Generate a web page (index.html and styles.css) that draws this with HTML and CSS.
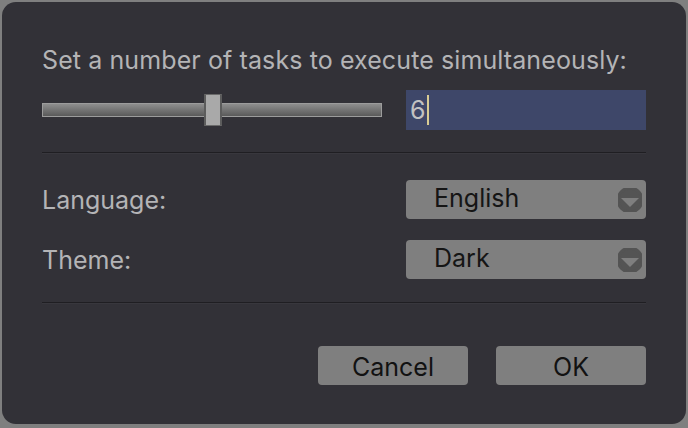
FILE: index.html
```html
<!DOCTYPE html>
<html>
<head>
<meta charset="utf-8">
<link rel="stylesheet" href="styles.css">
</head>
<body>
<div class="dialog">
  <div class="title">Set a number of tasks to execute simultaneously:</div>
  <div class="row slider-row">
    <div class="slider">
      <div class="track"></div>
      <div class="handle"></div>
    </div>
    <div class="input"><span class="val">6</span><span class="caret"></span></div>
  </div>
  <div class="sep sep1"></div>
  <div class="row form-row lang-row">
    <div class="label">Language:</div>
    <div class="combo"><span class="combo-text">English</span>
      <svg class="arrow" width="24" height="24" viewBox="0 0 24 24"><circle cx="12" cy="12" r="12" fill="#545454"/><path d="M3 10 L21 10 L12 19 Z" fill="#7f7f7f"/><circle cx="12" cy="12" r="12" fill="none" stroke="#545454" stroke-width="3"/></svg>
    </div>
  </div>
  <div class="row form-row theme-row">
    <div class="label">Theme:</div>
    <div class="combo"><span class="combo-text">Dark</span>
      <svg class="arrow" width="24" height="24" viewBox="0 0 24 24"><circle cx="12" cy="12" r="12" fill="#545454"/><path d="M3 10 L21 10 L12 19 Z" fill="#7f7f7f"/><circle cx="12" cy="12" r="12" fill="none" stroke="#545454" stroke-width="3"/></svg>
    </div>
  </div>
  <div class="sep sep2"></div>
  <div class="buttons">
    <div class="btn">Cancel</div>
    <div class="btn">OK</div>
  </div>
</div>
</body>
</html>
```

FILE: styles.css
```css
html, body {
  margin: 0;
  padding: 0;
  background: #7f7f7f;
  width: 688px;
  height: 428px;
  overflow: hidden;
}
body {
  padding: 2px 2px 0 2px;
  box-sizing: border-box;
  font-family: "Inter", "Liberation Sans", sans-serif;
}
.dialog {
  height: 422px;
  background: #323137;
  border-radius: 14px;
  padding: 0 40px;
  box-sizing: border-box;
  display: flex;
  flex-direction: column;
}
.title {
  margin-top: 44px;
  font-size: 25px;
  line-height: 28px;
  color: #b4b4b6;
  white-space: nowrap;
  letter-spacing: 0.1px;
}
.row {
  display: flex;
  align-items: center;
}
.slider-row {
  margin-top: 16px;
  height: 40px;
  justify-content: space-between;
}
.slider {
  position: relative;
  width: 340px;
  height: 32px;
  display: flex;
  align-items: center;
}
.track {
  width: 100%;
  height: 14px;
  box-sizing: border-box;
  border: 1px solid #9c9c9c;
  background: linear-gradient(#8e8e8e, #5a5a5a);
}
.handle {
  position: absolute;
  left: 162px;
  top: 0;
  width: 18px;
  height: 32px;
  box-sizing: border-box;
  background: #a9a9a9;
  border-left: 2px solid #5c5c5c;
  border-right: 2px solid #5c5c5c;
  border-top: 1px solid #6a6a6a;
  border-bottom: 1px solid #6a6a6a;
}
.input {
  width: 240px;
  height: 40px;
  background: #3e4769;
  display: flex;
  align-items: center;
  padding-left: 4px;
  box-sizing: border-box;
}
.val {
  font-size: 25px;
  color: #c2c2c2;
  line-height: 28px;
}
.caret {
  width: 2px;
  height: 30px;
  background: #d9cc94;
  margin-left: 1px;
}
.sep {
  height: 1px;
  background: #1f1e22;
  border-bottom: 1px solid #38373d;
}
.sep1 { margin-top: 22px; }
.sep2 { margin-top: 23px; }
.form-row {
  height: 39px;
  justify-content: space-between;
}
.lang-row { margin-top: 26px; }
.theme-row { margin-top: 21px; }
.label {
  font-size: 25px;
  color: #b4b4b6;
  padding-top: 1px;
}
.combo {
  width: 240px;
  height: 39px;
  background: #7f7f7f;
  border-radius: 4px;
  display: flex;
  align-items: center;
  justify-content: space-between;
  padding: 0 4px 0 28px;
  box-sizing: border-box;
}
.combo-text {
  font-size: 25px;
  color: #151515;
  margin-top: -3px;
}
.arrow { display: block; }
.buttons {
  margin-top: 42px;
  display: flex;
  justify-content: flex-end;
  gap: 28px;
}
.btn {
  width: 150px;
  height: 39px;
  background: #7f7f7f;
  border-radius: 4px;
  display: flex;
  align-items: center;
  justify-content: center;
  font-size: 25px;
  color: #121212;
  padding-top: 2px;
  box-sizing: border-box;
}
```
